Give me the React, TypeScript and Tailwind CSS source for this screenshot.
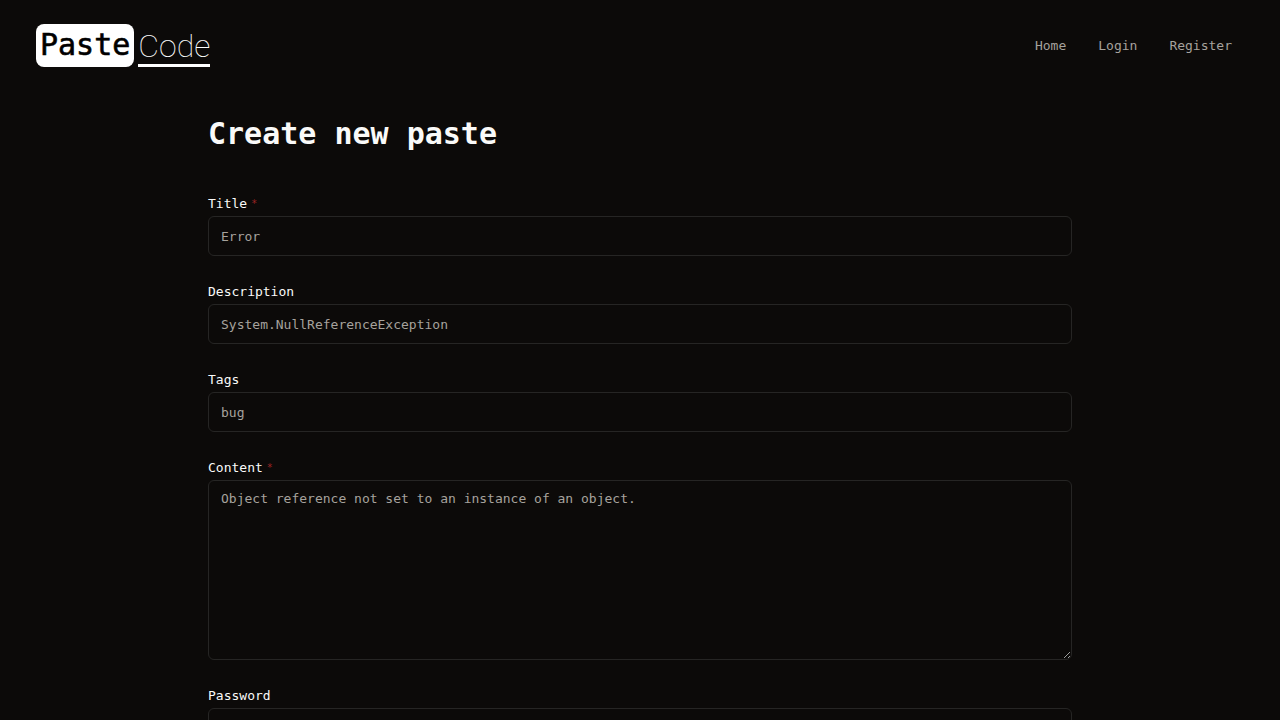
import type { ReactNode } from "react";

const inputStyle =
  "block w-full rounded-md border border-[#262524] bg-transparent px-3 text-[13px] leading-5 text-[#fafaf9] placeholder:text-[#a6a29d]";

const links = ["Home", "Login", "Register"];

type FieldProps = {
  id: string;
  label: string;
  required?: boolean;
  children: ReactNode;
};

const Field = ({ id, label, required, children }: FieldProps) => {
  return (
    <div>
      <div className="flex h-6 items-center gap-1">
        <label htmlFor={id} className="text-[13px] leading-5 font-medium text-[#fafaf9]">
          {label}
        </label>
        {required && <span className="h-4 text-[10px] leading-4 text-[#9b2323]">*</span>}
      </div>
      {children}
    </div>
  );
};

const Header = () => {
  return (
    <header className="flex items-center justify-between px-8 pt-6">
      <a href="#" className="ml-1 flex gap-1 text-3xl">
        <span className="rounded-lg bg-white px-1 pt-[3px] pb-1 font-medium text-black [-webkit-text-stroke:0.6px_black]">
          Paste
        </span>
        <span className="border-b-3 border-white pt-1 font-[Roboto,sans-serif] text-[32px] leading-9 font-thin text-white">
          Code
        </span>
      </a>
      <nav className="flex text-[13px] leading-5 text-[#a6a29d]">
        {links.map((link) => (
          <a key={link} href="#" className="px-4 py-2">
            {link}
          </a>
        ))}
      </nav>
    </header>
  );
};

const App = () => {
  return (
    <div className="min-h-screen bg-[#0c0a09] font-['DejaVu_Sans_Mono','Liberation_Mono',monospace] text-[#fafaf9]">
      <Header />
      <main className="mx-auto max-w-4xl px-4 pt-[49px] pb-12">
        <h1 className="text-3xl font-bold">Create new paste</h1>
        <form className="mt-10 space-y-6">
          <Field id="title" label="Title" required>
            <input id="title" className={`${inputStyle} h-10`} placeholder="Error" />
          </Field>
          <Field id="description" label="Description">
            <input
              id="description"
              className={`${inputStyle} h-10`}
              placeholder="System.NullReferenceException"
            />
          </Field>
          <Field id="tags" label="Tags">
            <input id="tags" className={`${inputStyle} h-10`} placeholder="bug" />
          </Field>
          <Field id="content" label="Content" required>
            <textarea
              id="content"
              className={`${inputStyle} h-[180px] py-2`}
              placeholder="Object reference not set to an instance of an object."
            />
          </Field>
          <Field id="password" label="Password">
            <input id="password" type="password" className={`${inputStyle} h-10`} />
          </Field>
        </form>
      </main>
    </div>
  );
};

export default App;
